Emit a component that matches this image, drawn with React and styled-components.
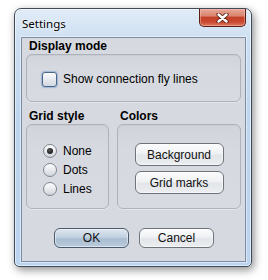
import React from "react";
import styled, { createGlobalStyle } from "styled-components";

const GlobalStyle = createGlobalStyle`
  html, body {
    margin: 0;
    padding: 0;
    background: #ffffff;
  }
  body {
    font-family: "Liberation Sans", Arial, sans-serif;
    font-size: 12px;
    color: #000;
  }
`;

const Page = styled.div`
  width: 268px;
  height: 280px;
  padding: 8px 0 0 14px;
  box-sizing: border-box;
`;

const Window = styled.div`
  width: 238px;
  height: 259px;
  box-sizing: border-box;
  border: 1px solid #3f4b5b;
  border-radius: 7px 7px 5px 5px;
  background: linear-gradient(180deg, #e1ecf7 0%, #cddff2 12%, #bed6ef 40%, #bad3ee 100%);
  box-shadow: 2px 3px 9px rgba(0, 0, 0, 0.45), inset 0 0 0 1px rgba(255, 255, 255, 0.55);
  display: flex;
  flex-direction: column;
  padding: 0 5px 4px 6px;
`;

const TitleBar = styled.div`
  height: 28px;
  display: flex;
  align-items: flex-start;
  justify-content: space-between;
`;

const Title = styled.div`
  font-family: "Noto Sans", "Segoe UI", sans-serif;
  font-size: 11.5px;
  padding: 7px 0 0 1px;
  color: #000;
  text-shadow: 0 0 6px rgba(255, 255, 255, 0.95), 0 0 2px rgba(255, 255, 255, 0.9);
`;

const CloseButton = styled.div`
  width: 47px;
  height: 18px;
  box-sizing: border-box;
  border: 1px solid #5b1e14;
  border-top: none;
  border-radius: 0 0 5px 5px;
  background: linear-gradient(180deg, #e9a898 0%, #d98570 40%, #c4412a 50%, #c8472f 75%, #dc7a60 100%);
  box-shadow: inset 0 0 0 1px rgba(255, 200, 190, 0.45);
  display: flex;
  align-items: center;
  justify-content: center;
`;

const Content = styled.div`
  width: 225px;
  height: 225px;
  box-sizing: border-box;
  border: 1px solid #7d8ca0;
  background: #d6d9df;
  box-shadow: 0 0 0 1px rgba(255, 255, 255, 0.45);
  padding: 1px 4px 0 4px;
  display: flex;
  flex-direction: column;
`;

const SectionTitle = styled.div`
  font-weight: bold;
  line-height: 15px;
  height: 15px;
  padding-left: 3px;
`;

const Panel = styled.div`
  box-sizing: border-box;
  height: ${(p) => p.$h}px;
  border: 1px solid #aeb3bb;
  border-radius: 6px;
  background: linear-gradient(180deg, #d1d4da 0%, #d6d9df 30%, #d7dae0 100%);
  box-shadow: inset 0 1px 1px rgba(0, 0, 0, 0.04), 0 1px 0 rgba(255, 255, 255, 0.35);
`;

const CheckPanel = styled(Panel)`
  display: flex;
  align-items: center;
  padding: 3px 0 0 15px;
`;

const CheckRow = styled.label`
  display: flex;
  align-items: center;
  gap: 6px;
`;

const CheckBox = styled.span`
  width: 15px;
  height: 15px;
  box-sizing: border-box;
  border: 1px solid #4d6687;
  border-radius: 3px;
  background: linear-gradient(180deg, #fbfcfd 0%, #e6e9ee 50%, #d3d8df 100%);
  box-shadow: 0 0 1px 1px rgba(120, 160, 210, 0.6);
`;

const Label = styled.span`
  font-size: 12px;
  line-height: 15px;
  white-space: nowrap;
`;

const Row = styled.div`
  display: flex;
  gap: 8px;
  margin-top: 7px;
`;

const Column = styled.div`
  width: ${(p) => p.$w}px;
  display: flex;
  flex-direction: column;
`;

const RadioPanel = styled(Panel)`
  display: flex;
  flex-direction: column;
  padding: 19px 0 0 16px;
`;

const RadioRow = styled.div`
  height: 19px;
  display: flex;
  align-items: flex-start;
  gap: 6px;
`;

const RadioCircle = styled.span`
  width: 14px;
  height: 14px;
  box-sizing: border-box;
  border-radius: 50%;
  border: 1px solid #7f858e;
  background: linear-gradient(180deg, #fdfdfe 0%, #e8eaee 50%, #cfd3da 100%);
  display: flex;
  align-items: center;
  justify-content: center;

  &::after {
    content: "";
    width: 6px;
    height: 6px;
    border-radius: 50%;
    background: radial-gradient(circle at 40% 35%, #555 0%, #1e1e1e 70%);
    display: ${(p) => (p.$checked ? "block" : "none")};
  }
`;

const RadioLabel = styled(Label)`
  line-height: 14px;
`;

const ButtonPanel = styled(Panel)`
  display: flex;
  flex-direction: column;
  align-items: center;
  padding-top: 18px;
  gap: 5px;
`;

const Button = styled.div`
  width: ${(p) => p.$w}px;
  height: ${(p) => p.$h}px;
  box-sizing: border-box;
  border: 1px solid ${(p) => (p.$primary ? "#4a5a6c" : "#6f747c")};
  border-radius: 6px;
  background: ${(p) =>
    p.$primary
      ? "linear-gradient(180deg, #dde6ef 0%, #c3d2e1 45%, #aabed2 55%, #b9cadb 100%)"
      : "linear-gradient(180deg, #fcfcfd 0%, #eff1f3 45%, #e2e5e9 55%, #eceef1 100%)"};
  box-shadow: inset 0 0 0 1px rgba(255, 255, 255, 0.5);
  display: flex;
  align-items: center;
  justify-content: center;
  font-size: 12px;
  color: #111;
`;

const Footer = styled.div`
  display: flex;
  justify-content: center;
  gap: 10px;
  margin-top: 19px;
  padding-left: 1px;
`;

const CloseIcon = () => (
  <svg width="13" height="10" viewBox="0 0 13 10">
    <path d="M2.5 1.5 L10.5 8.5 M10.5 1.5 L2.5 8.5" stroke="#5a2418" strokeWidth="4.2" strokeLinecap="round" />
    <path d="M2.5 1.5 L10.5 8.5 M10.5 1.5 L2.5 8.5" stroke="#ffffff" strokeWidth="2.4" strokeLinecap="round" />
  </svg>
);

const gridOptions = [
  { label: "None", checked: true },
  { label: "Dots", checked: false },
  { label: "Lines", checked: false },
];

export default function App() {
  return (
    <>
      <GlobalStyle />
      <Page>
        <Window>
          <TitleBar>
            <Title>Settings</Title>
            <CloseButton>
              <CloseIcon />
            </CloseButton>
          </TitleBar>
          <Content>
            <SectionTitle>Display mode</SectionTitle>
            <CheckPanel $h={48}>
              <CheckRow>
                <CheckBox />
                <Label>Show connection fly lines</Label>
              </CheckRow>
            </CheckPanel>
            <Row>
              <Column $w={83}>
                <SectionTitle>Grid style</SectionTitle>
                <RadioPanel $h={85}>
                  {gridOptions.map((o) => (
                    <RadioRow key={o.label}>
                      <RadioCircle $checked={o.checked} />
                      <RadioLabel>{o.label}</RadioLabel>
                    </RadioRow>
                  ))}
                </RadioPanel>
              </Column>
              <Column $w={124}>
                <SectionTitle>Colors</SectionTitle>
                <ButtonPanel $h={85}>
                  <Button $w={89} $h={23}>Background</Button>
                  <Button $w={89} $h={23}>Grid marks</Button>
                </ButtonPanel>
              </Column>
            </Row>
            <Footer>
              <Button $primary $w={75} $h={20}>OK</Button>
              <Button $w={75} $h={20}>Cancel</Button>
            </Footer>
          </Content>
        </Window>
      </Page>
    </>
  );
}
